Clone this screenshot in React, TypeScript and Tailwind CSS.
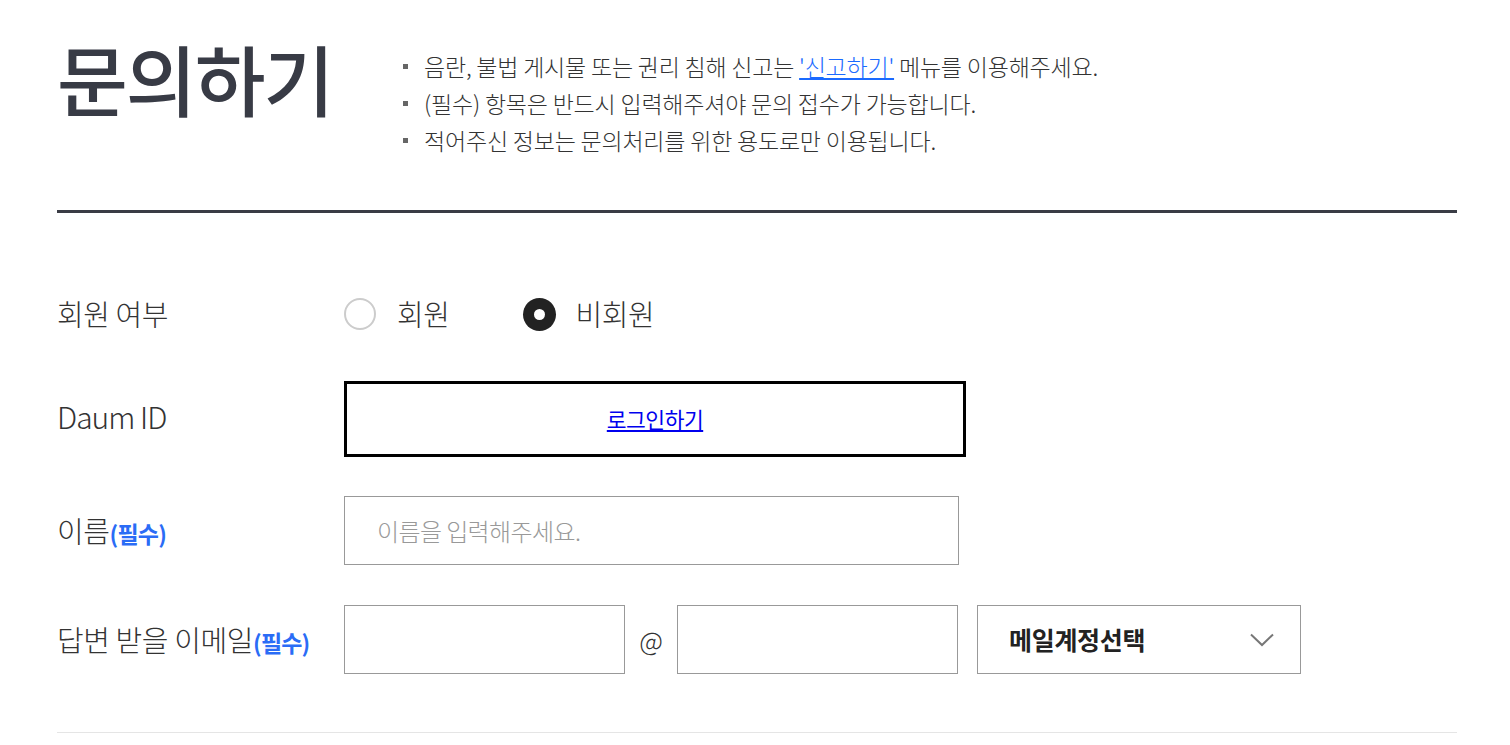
import React from "react";

const KR = { fontFamily: '"Noto Sans CJK KR", "Noto Sans", sans-serif' };

function Label({ text, req }: { text: string; req?: boolean }) {
  return (
    <div className="w-[287px] shrink-0 text-[29px] text-[#333] font-light tracking-[-0.4px]">
      {text}
      {req && <span className="text-[23px] font-bold text-[#2a6cf6] tracking-[-0.8px]">(필수)</span>}
    </div>
  );
}

export default function App() {
  return (
    <div className="bg-white w-[1510px] h-[745px] overflow-hidden" style={KR}>
      <div className="ml-[57px] w-[1400px]">
        <div className="flex h-[210px] border-b-[3px] border-[#3a3c45] box-content">
          <h1 className="mt-[28px] text-[77px] leading-[100px] font-medium text-[#383b45] tracking-[-2px] w-[346px] shrink-0">
            문의하기
          </h1>
          <ul className="mt-[48px] text-[23px] leading-[37px] text-[#333] font-light tracking-[-0.2px]">
            {[
              <>
                음란, 불법 게시물 또는 권리 침해 신고는{" "}
                <a className="text-[#1a6aff] underline" href="#">'신고하기'</a> 메뉴를 이용해주세요.
              </>,
              <>(필수) 항목은 반드시 입력해주셔야 문의 접수가 가능합니다.</>,
              <>적어주신 정보는 문의처리를 위한 용도로만 이용됩니다.</>,
            ].map((c, i) => (
              <li key={i} className="flex items-center">
                <span className="w-[5px] h-[5px] bg-[#666] mr-[16px]" />
                <span>{c}</span>
              </li>
            ))}
          </ul>
        </div>

        <div className="flex items-center h-[76px] mt-[63px]">
          <Label text="회원 여부" />
          <div className="flex items-center">
            <span className="w-[32px] h-[32px] rounded-full border-[2px] border-[#ccc] bg-white" />
            <span className="ml-[21px] text-[29px] text-[#333] font-light tracking-[-0.4px]">회원</span>
            <span className="ml-[73px] w-[33px] h-[33px] rounded-full bg-[#222] flex items-center justify-center">
              <span className="w-[11px] h-[11px] rounded-full bg-white" />
            </span>
            <span className="ml-[20px] text-[29px] text-[#333] font-light tracking-[-0.4px]">비회원</span>
          </div>
        </div>

        <div className="flex items-center mt-[29px]">
          <div className="w-[287px] shrink-0 text-[30px] text-[#333] font-light tracking-[-1px] -mt-[6px]">
            Daum ID
          </div>
          <div className="w-[622px] h-[76px] border-[3px] border-black flex items-center justify-center">
            <a href="#" className="text-[21.5px] text-[#0000ee] underline font-normal tracking-[-0.5px]">
              로그인하기
            </a>
          </div>
        </div>

        <div className="flex items-center mt-[39px]">
          <Label text="이름" req />
          <div className="w-[615px] h-[69px] border border-[#999] flex items-center pl-[32px] text-[24px] text-[#999] font-light tracking-[-0.6px]">
            이름을 입력해주세요.
          </div>
        </div>

        <div className="flex items-center mt-[40px]">
          <Label text="답변 받을 이메일" req />
          <div className="w-[281px] h-[69px] border border-[#999]" />
          <span className="w-[52px] text-center text-[26px] text-[#333] font-light">@</span>
          <div className="w-[281px] h-[69px] border border-[#999]" />
          <div className="ml-[19px] w-[324px] h-[69px] border border-[#999] flex items-center justify-between pl-[31px] pr-[26px]">
            <span className="text-[25px] font-bold text-[#222] tracking-[-0.3px]">메일계정선택</span>
            <svg width="24" height="14" viewBox="0 0 24 14" fill="none">
              <path d="M1 1.5 L12 12 L23 1.5" stroke="#777" strokeWidth="2" />
            </svg>
          </div>
        </div>

        <div className="mt-[58px] h-px bg-[#e5e5e5]" />
      </div>
    </div>
  );
}
